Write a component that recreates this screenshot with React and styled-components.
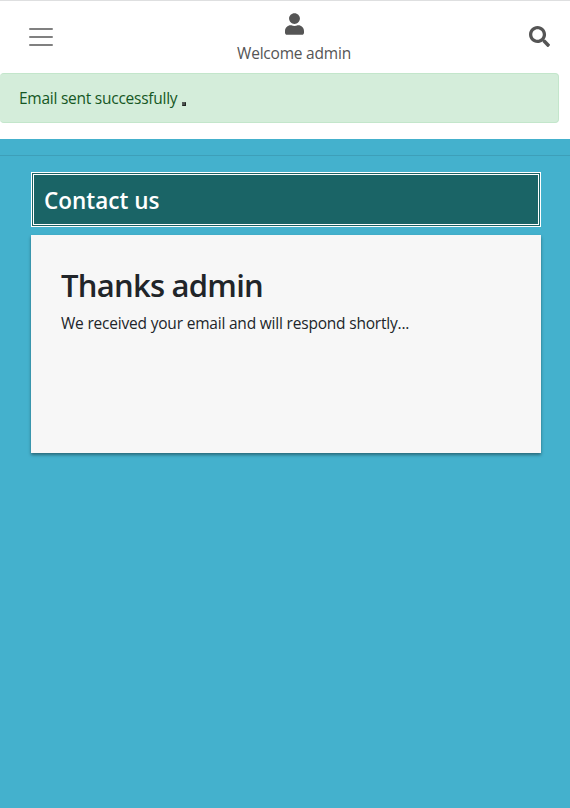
import React from "react";
import styled, { createGlobalStyle } from "styled-components";
import { FaUser, FaSearch } from "react-icons/fa";

const GlobalStyle = createGlobalStyle`
  *, *::before, *::after { box-sizing: border-box; }
  body {
    margin: 0;
    background: #44b1cd;
    color: #212529;
    font-family: "Open Sans", "Noto Sans", sans-serif;
    font-size: 15.5px;
    line-height: 24px;
  }
  h1, h2, p { margin: 0; }
`;

const Page = styled.div`
  min-height: 100vh;
  overflow: hidden;
`;

const Top = styled.div`
  height: 139px;
  background: #fff;
  border-top: 1px solid #dedfe0;
`;

const Header = styled.header`
  display: grid;
  grid-template-columns: 82px 1fr 62px;
  height: 72px;
  color: #555;
`;

const MenuButton = styled.button`
  display: flex;
  flex-direction: column;
  gap: 6px;
  border: 0;
  padding: 27px 0 0 29px;
  background: none;
`;

const MenuLine = styled.span`
  width: 24px;
  height: 2px;
  border-radius: 1px;
  background: #808080;
`;

const Account = styled.div`
  display: flex;
  flex-direction: column;
  align-items: center;
  padding: 12px 2px 0 0;
`;

const UserIcon = styled(FaUser)`
  width: 19px;
  height: 22px;
`;

const Welcome = styled.span`
  margin-top: 6px;
  letter-spacing: -0.21px;
  white-space: nowrap;
`;

const SearchIcon = styled(FaSearch)`
  width: 21px;
  height: 21px;
  margin: 25px 0 0 21px;
`;

const Alert = styled.div`
  display: flex;
  width: 559px;
  height: 50px;
  padding: 12px 19px;
  border: 1px solid #c3e6cb;
  border-left: 0;
  border-radius: 4px;
  background: #d4edda;
  color: #155724;
  letter-spacing: -0.25px;
  white-space: nowrap;
`;

const CloseMark = styled.span`
  width: 4px;
  height: 4px;
  margin: 16px 0 0 5px;
  border: 1px solid #555c57;
  border-right-color: #202522;
  border-bottom-color: #202522;
  background: #4b504d;
`;

const Divider = styled.hr`
  height: 1px;
  margin: 16px 0;
  border: 0;
  background: #3d9fb9;
`;

const Main = styled.main`
  display: flex;
  flex-direction: column;
  gap: 8px;
  padding: 0 29px 0 31px;
`;

const TitleBar = styled.div`
  height: 55px;
  padding: 11px 10px;
  border: 3px double #fff;
  background: #1a6466;
  color: #fff;
`;

const Title = styled.h2`
  font-size: 22.5px;
  font-weight: 600;
  line-height: 29px;
`;

const Card = styled.section`
  height: 218px;
  padding: 30px;
  background: #f7f7f7;
  box-shadow: 0 2px 3px rgba(0, 0, 0, 0.4);
`;

const Heading = styled.h1`
  font-size: 31px;
  font-weight: 600;
  line-height: 40px;
  letter-spacing: -0.75px;
  white-space: nowrap;
`;

const Message = styled.p`
  margin-top: 6px;
  letter-spacing: -0.2px;
  white-space: nowrap;
`;

export default function App() {
  return (
    <Page>
      <GlobalStyle />
      <Top>
        <Header>
          <MenuButton aria-label="Menu">
            <MenuLine />
            <MenuLine />
            <MenuLine />
          </MenuButton>
          <Account>
            <UserIcon />
            <Welcome>Welcome admin</Welcome>
          </Account>
          <SearchIcon />
        </Header>
        <Alert role="alert">
          <span>Email sent successfully</span>
          <CloseMark />
        </Alert>
      </Top>
      <Divider />
      <Main>
        <TitleBar>
          <Title>Contact us</Title>
        </TitleBar>
        <Card>
          <Heading>Thanks admin</Heading>
          <Message>We received your email and will respond shortly...</Message>
        </Card>
      </Main>
    </Page>
  );
}
